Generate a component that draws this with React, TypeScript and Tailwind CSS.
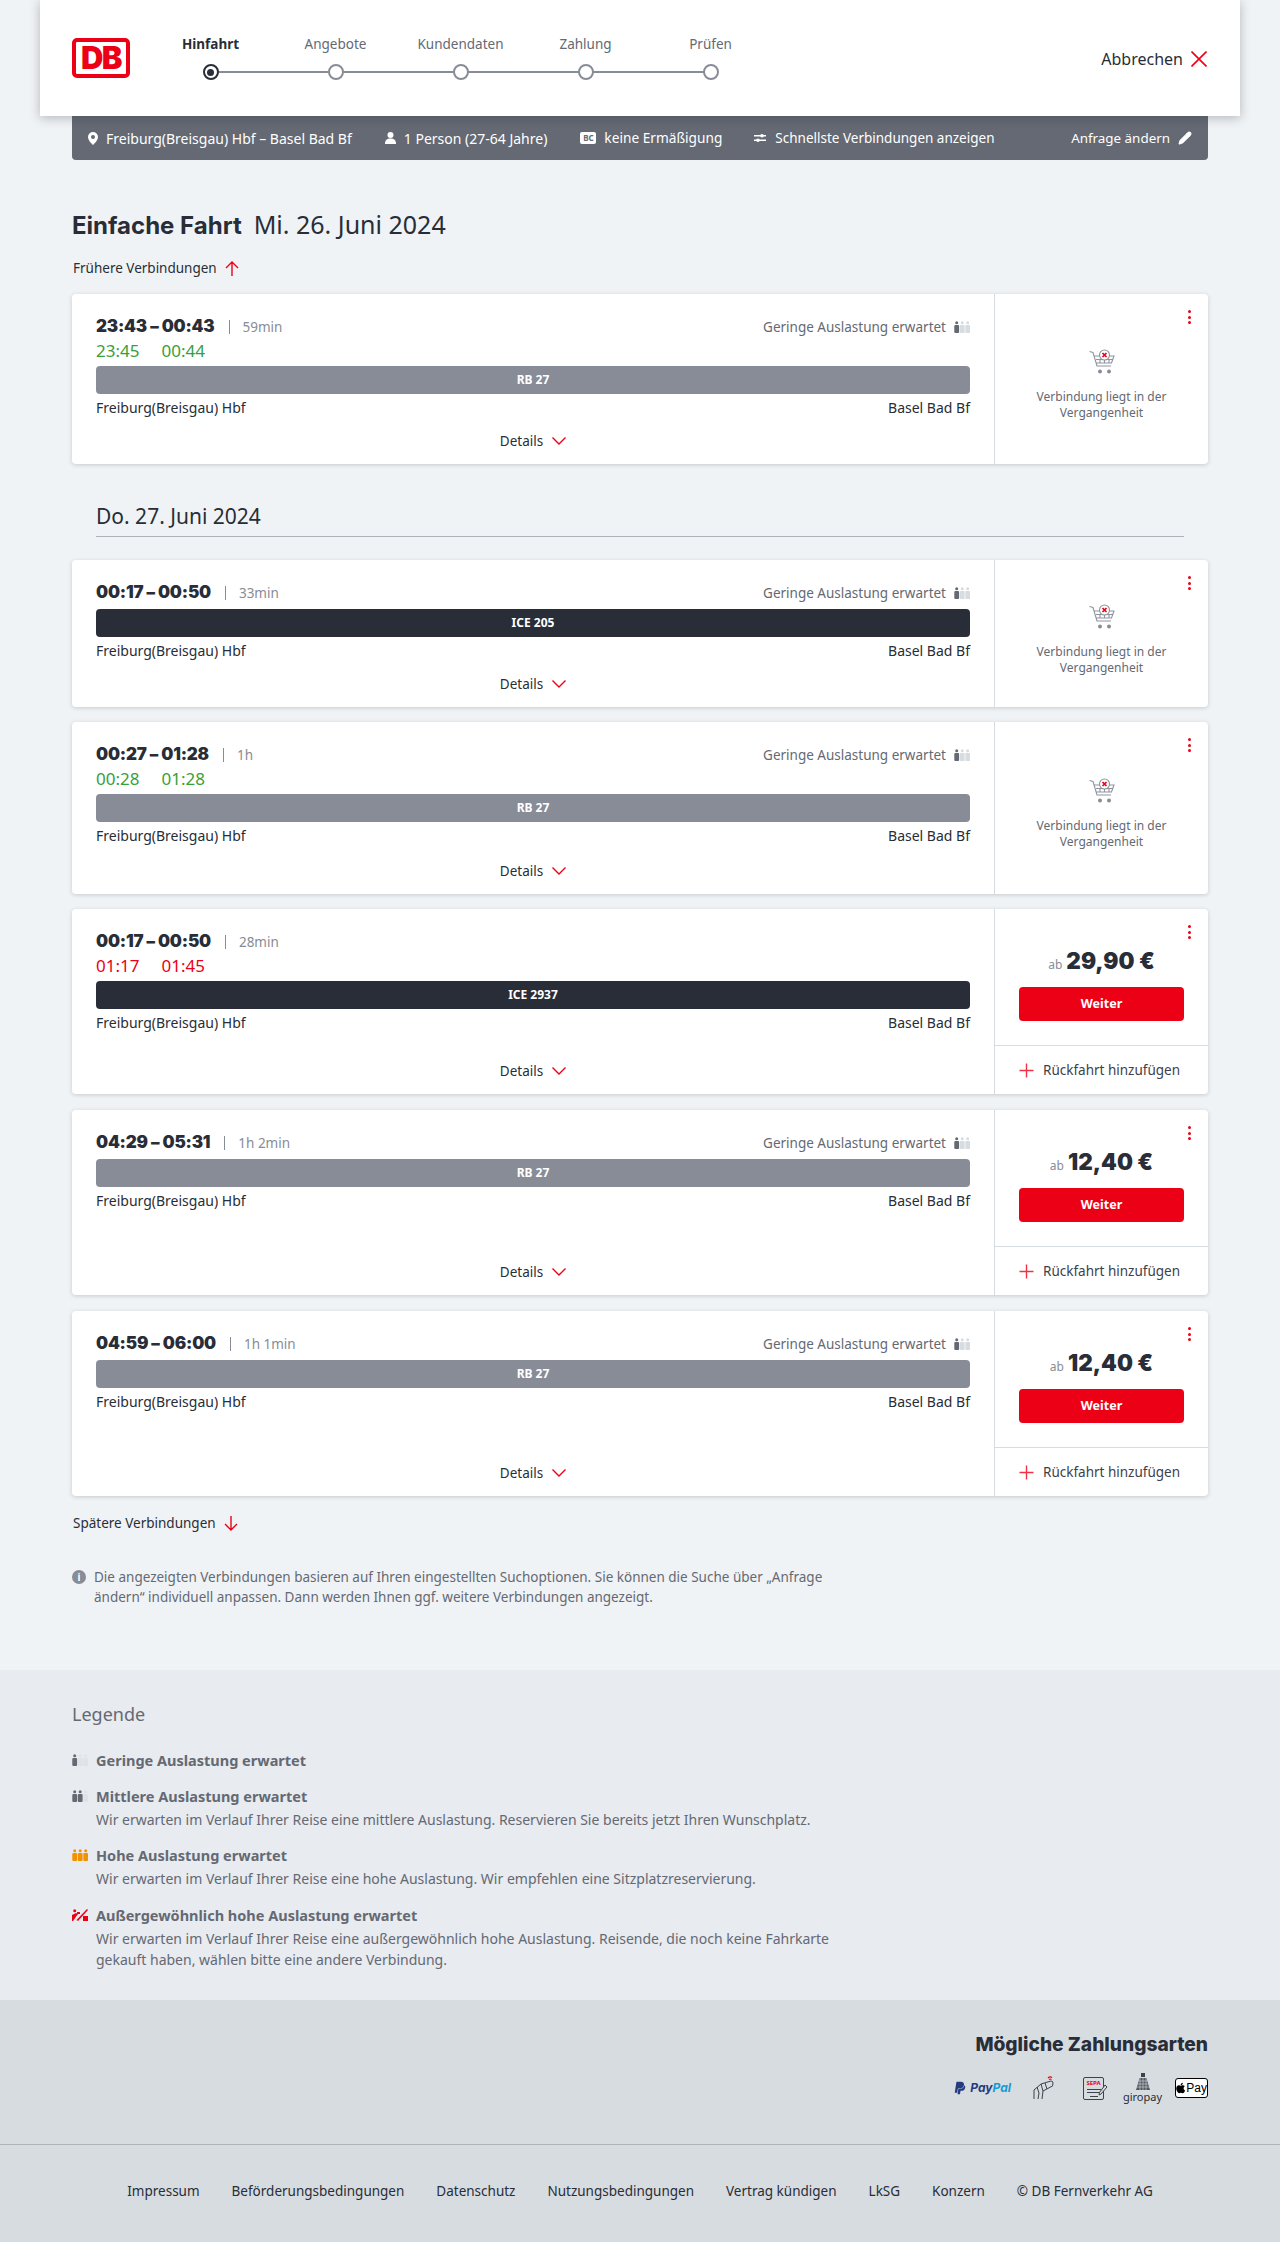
import { type ReactNode } from 'react';
import { Pencil } from 'lucide-react';
import { FaApple, FaPaypal } from 'react-icons/fa';

const headFont = { fontFamily: 'Inter, sans-serif' };

type Trip = {
  times: string;
  duration: string;
  real?: [string, string];
  realColor?: string;
  train: string;
  dark?: boolean;
  load?: boolean;
  price?: string;
  height: string;
};

const earlier: Trip = {
  times: '23:43 – 00:43',
  duration: '59min',
  real: ['23:45', '00:44'],
  realColor: 'text-[#38a03a]',
  train: 'RB 27',
  load: true,
  height: 'h-[170px]',
};

const trips: Trip[] = [
  { times: '00:17 – 00:50', duration: '33min', train: 'ICE 205', dark: true, load: true, height: 'h-[147px]' },
  {
    times: '00:27 – 01:28',
    duration: '1h',
    real: ['00:28', '01:28'],
    realColor: 'text-[#38a03a]',
    train: 'RB 27',
    load: true,
    height: 'h-[172px]',
  },
  {
    times: '00:17 – 00:50',
    duration: '28min',
    real: ['01:17', '01:45'],
    realColor: 'text-[#ec0016]',
    train: 'ICE 2937',
    dark: true,
    price: '29,90 €',
    height: 'h-[185px]',
  },
  { times: '04:29 – 05:31', duration: '1h 2min', train: 'RB 27', load: true, price: '12,40 €', height: 'h-[185px] mt-px' },
  { times: '04:59 – 06:00', duration: '1h 1min', train: 'RB 27', load: true, price: '12,40 €', height: 'h-[185px] mt-px' },
];

function DbLogo() {
  return (
    <div className="w-[58px] h-[40px] rounded-[5px] border-[4px] border-[#ec0016] bg-white flex items-center justify-center">
      <span className="text-[#ec0016] font-black text-[31px] leading-[30px] tracking-[-1.5px]" style={headFont}>
        DB
      </span>
    </div>
  );
}

function Load({ level = 1, color = '#646973', off = '#d7dce1' }: { level?: number; color?: string; off?: string }) {
  return (
    <svg width="16" height="12" viewBox="0 0 16 12" className="shrink-0">
      {[0, 1, 2].map((i) => (
        <g key={i} fill={i < level ? color : off}>
          <circle cx={2.7 + i * 5.5} cy={1.8} r={1.5} />
          <rect x={0.3 + i * 5.5} y={4} width={4.8} height={8} rx={1} />
        </g>
      ))}
    </svg>
  );
}

function LoadHigh() {
  return (
    <svg width="16" height="12" viewBox="0 0 16 12" className="shrink-0">
      <g fill="#ec0016">
        <circle cx="2.7" cy="1.8" r="1.5" />
        <path d="M0 6 L4 4 L6 5 L1 12 L0 12Z" />
        <path d="M15 0 L16 1 L6 12 L4.5 11Z" />
        <path d="M11 7h5v5h-5z" />
        <path d="M5 3h3v2H5z" />
      </g>
    </svg>
  );
}

function Cart() {
  return (
    <svg width="26" height="26" viewBox="0 0 26 26" fill="none">
      <g stroke="#8f949d" strokeWidth="1.1">
        <path d="M0.5 2.5 L4 3.5 L8 17 H22" />
        <path d="M5 7 H25 L22.5 14 H7" />
        <path d="M7 10.5 H24" />
        <circle cx="15.5" cy="6" r="5" fill="#fff" />
        <path d="M11 10.5v3.500M15.5 11v3M20 10.5v3.500" />
      </g>
      <circle cx="11" cy="22.5" r="2" fill="#878c96" />
      <circle cx="20" cy="22.5" r="2" fill="#878c96" />
      <path d="M13.5 4 L17.5 8 M17.5 4 L13.5 8" stroke="#ec0016" strokeWidth="1.7" />
    </svg>
  );
}

function Chevron() {
  return (
    <svg width="14" height="8" viewBox="0 0 14 8" fill="none" stroke="#ec0016" strokeWidth="1.4">
      <path d="M0.5 0.5 L7 7 L13.5 0.5" />
    </svg>
  );
}

function Arrow({ down }: { down?: boolean }) {
  return (
    <svg width="14" height="15" viewBox="0 0 14 15" fill="none" stroke="#ec0016" strokeWidth="1.4">
      {down ? <path d="M7 0 V14 M1 8 L7 14 L13 8" /> : <path d="M7 15 V1 M1 7 L7 1 L13 7" />}
    </svg>
  );
}

function Dots() {
  return (
    <div className="absolute top-[16px] right-[17px] flex flex-col gap-[2.5px]">
      <span className="w-[3px] h-[3px] rounded-full bg-[#ec0016]" />
      <span className="w-[3px] h-[3px] rounded-full bg-[#ec0016]" />
      <span className="w-[3px] h-[3px] rounded-full bg-[#ec0016]" />
    </div>
  );
}

function TripCard({ trip }: { trip: Trip }) {
  return (
    <div className={`relative flex ${trip.height} bg-white rounded-[4px] shadow-[0_1px_4px_rgba(40,45,55,0.2)]`}>
      <div className="flex-1 min-w-0 flex flex-col px-6 pt-[21px] pb-[13px]">
        <div className="flex items-center h-[24px] justify-between">
          <div className="flex items-center">
            <span className="text-[17px] font-black text-[#282d37] tracking-[-0.2px]" style={headFont}>
              {trip.times}
            </span>
            <span className="ml-[14px] w-px h-[14px] bg-[#878c96]" />
            <span className="ml-[13px] text-[13.5px] text-[#878c96]">{trip.duration}</span>
          </div>
          {trip.load && (
            <div className="flex items-center gap-[8px] text-[13.5px] text-[#646973]">
              Geringe Auslastung erwartet
              <Load />
            </div>
          )}
        </div>
        {trip.real && (
          <div className={`flex gap-[22px] text-[17px] leading-[23px] ${trip.realColor}`}>
            <span>{trip.real[0]}</span>
            <span>{trip.real[1]}</span>
          </div>
        )}
        <div className={`mt-[4px] h-[28px] shrink-0 rounded-[4px] flex items-center justify-center text-white text-[12px] font-bold ${trip.dark ? 'bg-[#282d37]' : 'bg-[#878c96]'}`}>
          {trip.train}
        </div>
        <div className="flex justify-between mt-[4px] text-[14px] leading-[20px] text-[#282d37]">
          <span>Freiburg(Breisgau) Hbf</span>
          <span>Basel Bad Bf</span>
        </div>
        <div className="mt-auto flex items-center justify-center gap-[9px] text-[13.5px] leading-[20px] text-[#282d37]">
          Details
          <Chevron />
        </div>
      </div>
      <div className="w-[214px] shrink-0 border-l border-[#d7dce1] flex flex-col">
        {trip.price ? (
          <>
            <div className="flex-1 flex flex-col items-center px-6 pt-[37px]">
              <div className="flex items-baseline gap-[4px] text-[#282d37]">
                <span className="text-[12px] text-[#878c96]">ab</span>
                <span className="text-[22.5px] leading-[30px] font-black" style={headFont}>{trip.price}</span>
              </div>
              <button className="mt-[11px] w-[165px] h-[34px] rounded-[4px] bg-[#ec0016] text-white text-[12.5px] font-bold">Weiter</button>
            </div>
            <div className="h-[49px] border-t border-[#d7dce1] flex items-center pl-[24px] gap-[9px] text-[13.5px] text-[#3c414b]">
              <svg width="15" height="15" viewBox="0 0 15 15" stroke="#ec0016" strokeWidth="1.4" opacity="0.8">
                <path d="M7.5 0.5 V14.5 M0.5 7.5 H14.5" />
              </svg>
              Rückfahrt hinzufügen
            </div>
          </>
        ) : (
          <div className="flex-1 flex flex-col items-center justify-center px-6 pt-[12px] text-center text-[12px] leading-[16px] text-[#646973]">
            <Cart />
            <p className="mt-[14px]">Verbindung liegt in der Vergangenheit</p>
          </div>
        )}
      </div>
      <Dots />
    </div>
  );
}

function Step({ label, active, last }: { label: string; active?: boolean; last?: boolean }) {
  return (
    <div className="relative w-[125px] flex flex-col items-center">
      <span className={`text-[13.5px] leading-[20px] ${active ? 'font-bold text-[#282d37]' : 'text-[#646973]'}`}>{label}</span>
      <div className="relative mt-[10px] h-[16px] w-full flex justify-center">
        {!last && <div className="absolute left-1/2 top-[7px] h-[2px] w-full bg-[#878c96]" />}
        <div className={`relative w-[16px] h-[16px] rounded-full bg-white border-2 flex items-center justify-center ${active ? 'border-[#282d37]' : 'border-[#878c96]'}`}>
          {active && <span className="w-[7px] h-[7px] rounded-full bg-[#282d37]" />}
        </div>
      </div>
    </div>
  );
}

function LegendItem({ icon, title, children }: { icon: ReactNode; title: string; children?: ReactNode }) {
  return (
    <div>
      <div className="flex items-center gap-[8px] text-[14.5px] leading-[20px] font-bold text-[#646973]">
        {icon}
        {title}
      </div>
      {children && <p className="pl-[24px] mt-[3px] text-[14px] leading-[21px] text-[#646973]">{children}</p>}
    </div>
  );
}

function HandCard() {
  return (
    <svg width="22" height="24" viewBox="0 0 22 24" fill="none" stroke="#3c414b" strokeWidth="1">
      <path d="M1 23 V14 L8 8 L18 5 Q20 5 20 7 L19.5 10 L10 15 L9 23" />
      <path d="M8 8 L10 15 M12 7 L14 13 M4 11 L6 17 L5 23" />
      <path d="M15 2 Q17 0 19 1.5 M16 3.5 Q17.5 2.5 18.5 3.5" stroke="#ec0016" strokeWidth="1.2" />
    </svg>
  );
}

function Sepa() {
  return (
    <div className="relative w-[25px] h-[23px]">
      <div className="w-[21px] h-[23px] border border-[#3c414b] rounded-[2px] pt-[2px] flex flex-col items-center">
        <span className="text-[6px] leading-[7px] font-bold text-[#ec0016]">SEPA</span>
        <span className="mt-[2px] w-[14px] h-px bg-[#3c414b]" />
        <span className="mt-[2px] w-[14px] h-px bg-[#3c414b]" />
        <span className="mt-[3px] w-[8px] h-px bg-[#3c414b]" />
      </div>
      <svg width="10" height="12" viewBox="0 0 10 12" className="absolute right-0 top-[7px]" fill="#d7dce1" stroke="#3c414b">
        <path d="M7 1 L9 3 L3 10 L1 11 L1.5 8.5Z" />
      </svg>
    </div>
  );
}

function Giropay() {
  return (
    <div className="flex flex-col items-center w-[33px]">
      <svg width="14" height="17" viewBox="0 0 14 17" fill="#3c414b">
        <path d="M5 0h4v4H5z" />
        <path d="M3.5 5h7l3.500 12H0z" opacity="0.85" />
        <path d="M0 8h14M0 11h14M0 14h14M4 5v12M7 5v12M10 5v12" stroke="#d7dce1" strokeWidth="0.6" />
      </svg>
      <span className="text-[11px] leading-[13px] text-[#282d37]">giropay</span>
    </div>
  );
}

export default function App() {
  return (
    <div className="min-h-[2242px] bg-[#f0f3f5] text-[#282d37]" style={{ fontFamily: '"Noto Sans", sans-serif' }}>
      <header className="relative z-10 mx-[40px] h-[116px] bg-white flex items-center justify-between pl-[32px] pr-[33px] shadow-[0_2px_10px_rgba(40,45,55,0.3)]">
        <div className="flex items-center">
          <DbLogo />
          <nav className="ml-[18px] flex pb-[2px]">
            <Step label="Hinfahrt" active />
            <Step label="Angebote" />
            <Step label="Kundendaten" />
            <Step label="Zahlung" />
            <Step label="Prüfen" last />
          </nav>
        </div>
        <div className="flex items-center gap-[8px] pt-[2px] text-[16px] text-[#282d37]">
          Abbrechen
          <svg width="16" height="16" viewBox="0 0 16 16" stroke="#ec0016" strokeWidth="1.6">
            <path d="M0.5 0.5 L15.5 15.5 M15.5 0.5 L0.5 15.5" />
          </svg>
        </div>
      </header>

      <div className="mx-[72px] h-[44px] rounded-b-[4px] bg-[#646973] flex items-center justify-between pl-[16px] pr-[16px] text-[14px] text-white">
        <div className="flex items-center">
          <svg width="10" height="13" viewBox="0 0 10 13">
            <path fillRule="evenodd" fill="white" d="M5 0a5 5 0 0 1 5 5c0 3-3 6-5 8-2-2-5-5-5-8a5 5 0 0 1 5-5zm0 3a2 2 0 1 0 0 4 2 2 0 0 0 0-4z" />
          </svg>
          <span className="ml-[8px]">Freiburg(Breisgau) Hbf – Basel Bad Bf</span>
          <svg width="11" height="12" viewBox="0 0 11 12" fill="white" className="ml-[33px]">
            <circle cx="5.5" cy="3" r="3" />
            <path d="M0 12c0-4 2-5.500 5.500-5.500S11 8 11 12z" />
          </svg>
          <span className="ml-[8px]">1 Person (27-64 Jahre)</span>
          <span className="ml-[33px] w-[16px] h-[12px] rounded-[2px] bg-white text-[#646973] text-[8px] font-bold leading-[12px] text-center">BC</span>
          <span className="ml-[8px] text-[13.7px]">keine Ermäßigung</span>
          <svg width="12" height="10" viewBox="0 0 12 10" className="ml-[32px]" fill="white">
            <path d="M0 2h12v1.400H0zM0 6.600h12V8H0z" />
            <circle cx="8" cy="2.700" r="1.800" />
            <circle cx="4" cy="7.300" r="1.800" />
          </svg>
          <span className="ml-[9px] text-[13.5px]">Schnellste Verbindungen anzeigen</span>
        </div>
        <div className="flex items-center gap-[8px] text-[13.4px]">
          Anfrage ändern
          <Pencil size={14} fill="white" stroke="white" />
        </div>
      </div>

      <main className="mx-[72px]">
        <h1 className="mt-[48px] text-[25px] leading-[32px]">
          <span className="font-bold text-[24px]" style={headFont}>Einfache Fahrt</span>
          <span className="ml-[12px]">Mi. 26. Juni 2024</span>
        </h1>
        <div className="mt-[16px] ml-[1px] flex items-center gap-[8px] text-[13.5px] leading-[20px]">
          Frühere Verbindungen <Arrow />
        </div>
        <div className="mt-[16px]">
          <TripCard trip={earlier} />
        </div>
        <div className="mx-[24px] mt-[37px] pb-[5px] border-b border-[#afb4bb] text-[21px] leading-[30px]">Do. 27. Juni 2024</div>
        <div className="mt-[23px] flex flex-col gap-[15px]">
          {trips.map((t, i) => (
            <TripCard key={i} trip={t} />
          ))}
        </div>
        <div className="mt-[17px] ml-[1px] flex items-center gap-[8px] text-[13.5px] leading-[20px]">
          Spätere Verbindungen <Arrow down />
        </div>
        <div className="mt-[34px] flex gap-[8px] w-[760px] text-[13.5px] leading-[20px] text-[#646973]">
          <div className="mt-[3px] w-[14px] h-[14px] shrink-0 rounded-full bg-[#878c96] text-white text-[10px] leading-[14px] font-bold text-center">i</div>
          <p>
            Die angezeigten Verbindungen basieren auf Ihren eingestellten Suchoptionen. Sie können die Suche über „Anfrage ändern“ individuell anpassen. Dann werden Ihnen ggf. weitere Verbindungen angezeigt.
          </p>
        </div>
      </main>

      <section className="mt-[63px] h-[330px] bg-[#e8ebf0] px-[72px] pt-[32px]">
        <h2 className="text-[18px] leading-[24px] text-[#646973]">Legende</h2>
        <div className="mt-[24px] flex flex-col gap-[15.5px] w-[790px]">
          <LegendItem icon={<Load off="#dfe2e7" />} title="Geringe Auslastung erwartet" />
          <LegendItem icon={<Load level={2} off="#dfe2e7" />} title="Mittlere Auslastung erwartet">
            Wir erwarten im Verlauf Ihrer Reise eine mittlere Auslastung. Reservieren Sie bereits jetzt Ihren Wunschplatz.
          </LegendItem>
          <LegendItem icon={<Load level={3} color="#f39200" />} title="Hohe Auslastung erwartet">
            Wir erwarten im Verlauf Ihrer Reise eine hohe Auslastung. Wir empfehlen eine Sitzplatzreservierung.
          </LegendItem>
          <LegendItem icon={<LoadHigh />} title="Außergewöhnlich hohe Auslastung erwartet">
            Wir erwarten im Verlauf Ihrer Reise eine außergewöhnlich hohe Auslastung. Reisende, die noch keine Fahrkarte gekauft haben, wählen bitte eine andere Verbindung.
          </LegendItem>
        </div>
      </section>

      <footer className="bg-[#d7dce1]">
        <div className="h-[145px] border-b border-[#afb4bb] px-[72px] pt-[30px] flex flex-col items-end">
          <h2 className="text-[19.2px] leading-[28px] font-extrabold" style={headFont}>Mögliche Zahlungsarten</h2>
          <div className="mt-[15px] h-[30px] flex items-center">
            <FaPaypal size={14} className="text-[#253b80]" />
            <span className="ml-[3px] italic font-bold text-[12px] text-[#253b80]" style={headFont}>
              Pay<span className="text-[#179bd7]">Pal</span>
            </span>
            <div className="ml-[22px]">
              <HandCard />
            </div>
            <div className="ml-[28px]">
              <Sepa />
            </div>
            <div className="ml-[18px]">
              <Giropay />
            </div>
            <div className="ml-[16px] w-[33px] h-[20px] bg-white border border-black rounded-[3px] flex items-center justify-center gap-[1px] text-[12px] text-black" style={{ fontFamily: '"Liberation Sans", sans-serif' }}>
              <FaApple size={12} />
              Pay
            </div>
          </div>
        </div>
        <div className="h-[97px] pb-[4px] flex items-center justify-center gap-[32px] text-[13.5px] text-[#282d37]">
          <span>Impressum</span>
          <span>Beförderungsbedingungen</span>
          <span>Datenschutz</span>
          <span>Nutzungsbedingungen</span>
          <span>Vertrag kündigen</span>
          <span>LkSG</span>
          <span>Konzern</span>
          <span>© DB Fernverkehr AG</span>
        </div>
      </footer>
    </div>
  );
}
